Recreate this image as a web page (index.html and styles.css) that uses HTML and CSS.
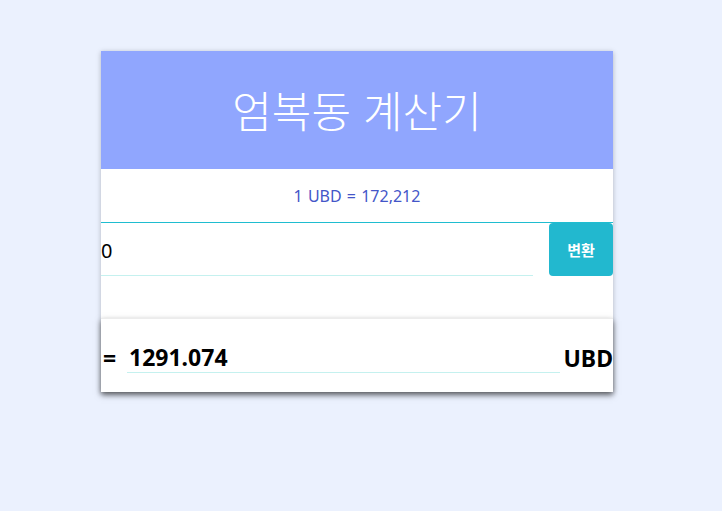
FILE: index.html
```html
<!DOCTYPE html>
<html lang="ko">
<head>
<meta charset="utf-8">
<title>엄복동 계산기</title>
<link rel="stylesheet" href="styles.css">
</head>
<body>
<div class="card">
  <header class="header"><h1 class="title">엄복동 계산기</h1></header>
  <div class="rate">1 UBD = 172,212</div>
  <div class="form">
    <input class="amount" type="text" value="0">
    <button class="convert">변환</button>
  </div>
  <div class="result">
    <span class="eq">=</span>
    <span class="value">1291.074</span>
    <span class="unit">UBD</span>
  </div>
</div>
</body>
</html>
```
FILE: styles.css
```css
html, body { margin: 0; padding: 0; }
body {
  background: #ebf1fe;
  font-family: "Noto Sans", "Noto Sans CJK KR", sans-serif;
  height: 511px;
}
.card {
  width: 512px;
  margin: 51px 0 0 101px;
  background: #fff;
  box-shadow: 0 1px 5px rgba(0,0,0,0.25);
}
.header {
  height: 118px;
  background: #90a6fe;
  display: flex;
  align-items: center;
  justify-content: center;
}
.title {
  margin: 0;
  color: #fff;
  font-family: "Noto Sans CJK KR", sans-serif;
  font-weight: 300;
  font-size: 43px;
  line-height: 1;
  padding-bottom: 2px;
}
.rate {
  display: flex;
  align-items: center;
  justify-content: center;
  color: #4456c8;
  font-size: 16px;
  word-spacing: 1px;
  border-bottom: 1px solid #1fbdd0;
  box-sizing: border-box;
  height: 54px;
  padding-top: 1px;
}
.form {
  display: flex;
  gap: 16px;
  height: 95px;
  align-items: flex-start;
}
.amount {
  flex: 1;
  height: 53px;
  border: none;
  border-bottom: 1px solid #c5f1ef;
  padding: 2px 0 0;
  margin: 0;
  font-family: "Noto Sans", sans-serif;
  font-size: 20px;
  color: #000;
  outline: none;
  box-sizing: border-box;
}
.convert {
  width: 64px;
  height: 53px;
  border: none;
  border-radius: 4px;
  background: #22b8cf;
  color: #fff;
  font-family: "Noto Sans CJK KR", sans-serif;
  font-weight: 700;
  font-size: 15px;
  padding: 0;
}
.result {
  height: 74px;
  border-top: 1px solid #ececec;
  box-sizing: border-box;
  display: flex;
  align-items: center;
  padding: 4px 0 0 2px;
  box-shadow: 0 3px 6px rgba(0,0,0,0.55);
  font-weight: 700;
  font-size: 23px;
  color: #000;
}
.eq { width: 24px; }
.value {
  flex: 1;
  margin-left: 0;
  padding-left: 2px;
  border-bottom: 1px solid #c5f1ef;
  line-height: 29px;
}
.unit { margin-left: 3px; }
```
